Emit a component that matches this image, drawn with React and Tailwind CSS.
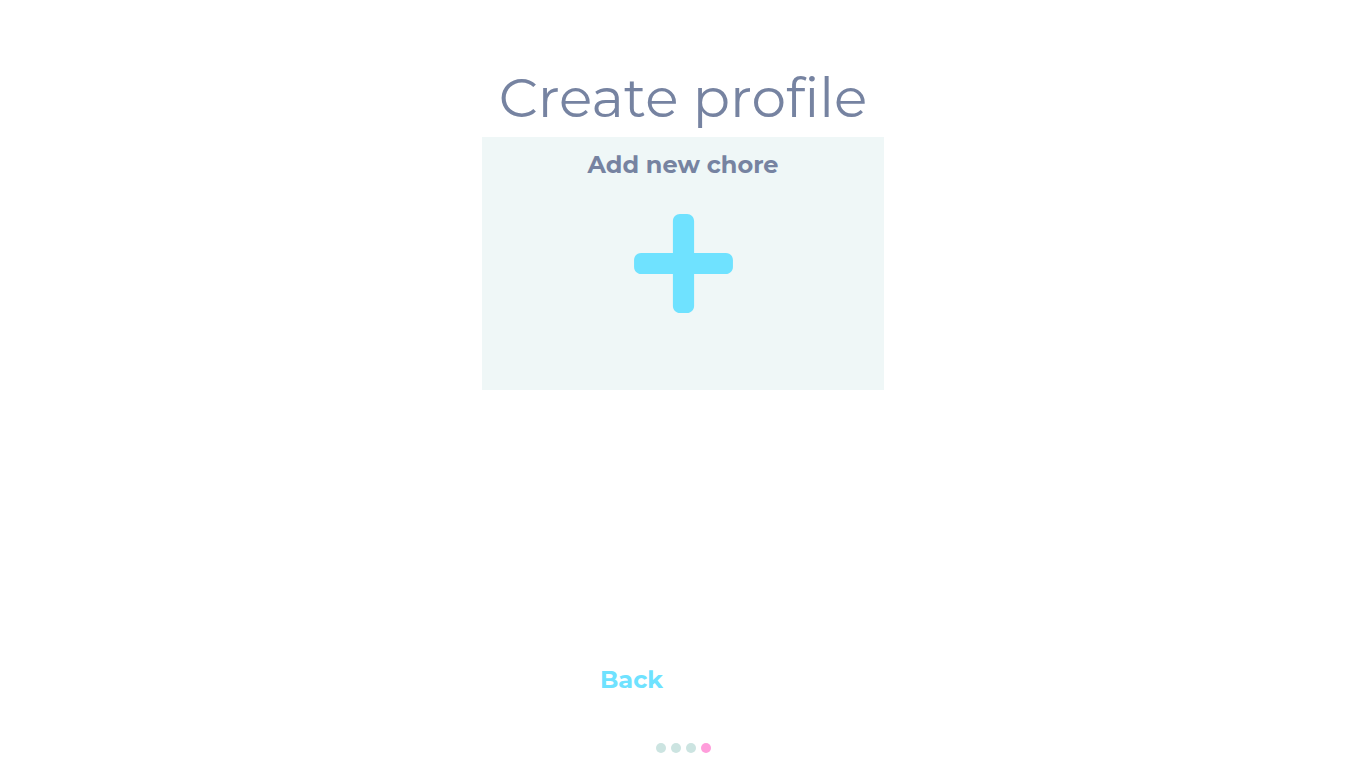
const steps = [
  { id: 1, color: 'bg-[#cce4e1]' },
  { id: 2, color: 'bg-[#cce4e1]' },
  { id: 3, color: 'bg-[#cce4e1]' },
  { id: 4, color: 'bg-[#ff9ddb]' },
];

function PlusIcon() {
  return (
    <svg viewBox="0 0 448 512" className="h-[113px] w-[99px]" fill="currentColor" aria-hidden="true">
      <path d="M416 208H272V64c0-17.67-14.33-32-32-32h-32c-17.67 0-32 14.33-32 32v144H32c-17.67 0-32 14.33-32 32v32c0 17.67 14.33 32 32 32h144v144c0 17.67 14.33 32 32 32h32c17.67 0 32-14.33 32-32V304h144c17.67 0 32-14.33 32-32v-32c0-17.67-14.33-32-32-32z" />
    </svg>
  );
}

export default function App() {
  return (
    <div className="flex min-h-screen flex-col items-center bg-white pt-16 pb-[15px] font-['Montserrat','Open_Sans',sans-serif] text-[#7683a1] antialiased">
      <h1 className="mb-1.5 text-[55px] leading-[67px] font-normal [font-variant-ligatures:none]">Create profile</h1>
      <main className="flex w-full flex-1 flex-col items-center">
        <button type="button" className="flex h-[253px] w-full max-w-[402px] flex-col items-center bg-[#eff7f7] pt-3">
          <span className="mb-[26px] text-2xl font-bold">Add new chore</span>
          <span className="text-[#6fe2ff]"><PlusIcon /></span>
        </button>
      </main>
      <nav className="mb-[47px] flex w-full max-w-[206px] px-5">
        <button type="button" className="text-2xl font-bold text-[#6fe2ff]">Back</button>
      </nav>
      <ol className="flex gap-[5px]" aria-label="Progress">
        {steps.map((s) => (
          <li key={s.id} className={`size-2.5 rounded-full ${s.color}`} />
        ))}
      </ol>
    </div>
  );
}
